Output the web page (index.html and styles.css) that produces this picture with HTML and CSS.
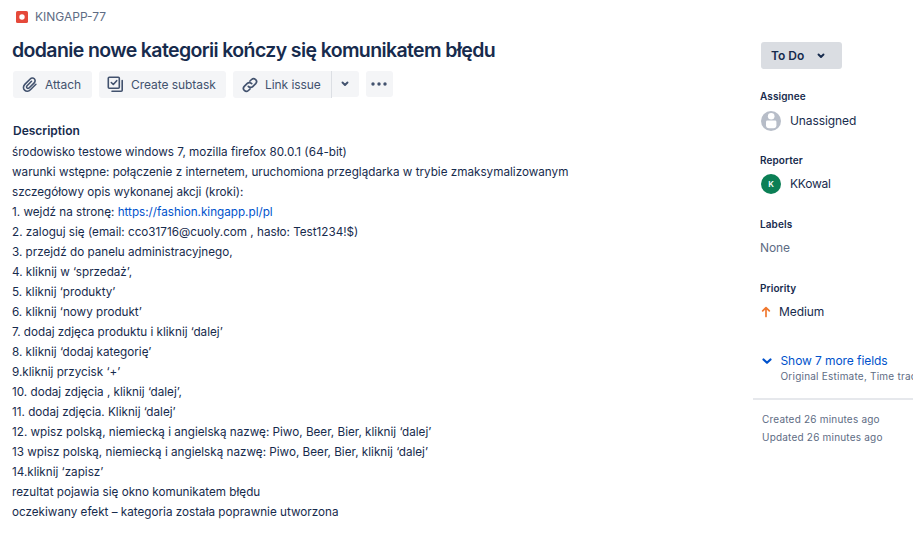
FILE: index.html
```html
<!DOCTYPE html>
<html lang="pl">
<head>
<meta charset="utf-8">
<title>KINGAPP-77</title>
<link rel="stylesheet" href="styles.css">
</head>
<body>
<div class="page">
  <main class="issue">
    <div class="crumb">
      <svg width="12" height="12" viewBox="0 0 12 12"><rect width="12" height="12" rx="1.6" fill="#e5493a"/><circle cx="6" cy="6" r="2.7" fill="#fff"/></svg>
      <span class="key">KINGAPP-77</span>
    </div>
    <h1><span class="title">dodanie nowe kategorii kończy się komunikatem błędu</span></h1>
    <div class="toolbar">
      <button class="btn attach">
        <svg width="16" height="16" viewBox="0 0 16 16" fill="none" stroke="#42526e" stroke-width="1.6" stroke-linecap="round" stroke-linejoin="round"><path d="M13.900 7.300 8.400 12.800c-1.700 1.700-4.200 1.900-5.800.4s-1.500-4.100.2-5.800L8.200 2c1.200-1.200 3-1.300 4.100-.2s1.100 2.900-.1 4.100L7.300 10.800c-.7.7-1.700.8-2.300.2s-.6-1.600.1-2.300L9.500 4.300"/></svg>
        <span class="label-attach">Attach</span>
      </button>
      <button class="btn subtask">
        <svg width="17" height="17" viewBox="0 0 17 17" fill="none" stroke="#42526e" stroke-width="1.600" stroke-linecap="round" stroke-linejoin="round"><rect x="1.300" y="1.300" width="11" height="11" rx="1"/><path d="m4.300 6.500 2 2L9.700 4.700M15.200 4.500v9.700a1 1 0 0 1-1 1H5"/></svg>
        <span class="label-subtask">Create subtask</span>
      </button>
      <div class="split">
        <button class="btn link">
          <svg width="16" height="16" viewBox="0 0 16 16" fill="none" stroke="#42526e" stroke-width="1.700" stroke-linecap="round"><path d="M6.300 9.400a3 3 0 0 0 4.400.2l3-3a2.900 2.900 0 0 0-4.100-4.100L8 4M9.700 6.600a3 3 0 0 0-4.400-.2l-3 3a2.900 2.900 0 0 0 4.100 4.100L8 12"/></svg>
          <span class="label-link">Link issue</span>
        </button>
        <button class="btn more-links"><svg width="8" height="6" viewBox="0 0 8 6" fill="none" stroke="#42526e" stroke-width="1.900" stroke-linecap="round" stroke-linejoin="round"><path d="m1.500 1.500 2.500 2.500 2.500-2.500"/></svg></button>
      </div>
      <button class="btn dots"><svg width="16" height="4" viewBox="0 0 16 4" fill="#42526e"><circle cx="2" cy="2" r="1.700"/><circle cx="8" cy="2" r="1.700"/><circle cx="14" cy="2" r="1.700"/></svg></button>
    </div>
    <h2><span class="desc-title">Description</span></h2>
    <div class="description">
      <p><span>środowisko testowe windows 7, mozilla firefox 80.0.1 (64-bit)</span></p>
      <p><span>warunki wstępne: połączenie z internetem, uruchomiona przeglądarka w trybie zmaksymalizowanym</span></p>
      <p><span>szczegółowy opis wykonanej akcji (kroki):</span></p>
      <p><span>1. wejdź na stronę: <a>https://fashion.kingapp.pl/pl</a></span></p>
      <p><span>2. zaloguj się (email: cco31716@cuoly.com , hasło: Test1234!$)</span></p>
      <p><span>3. przejdź do panelu administracyjnego,</span></p>
      <p><span>4. kliknij w ‘sprzedaż’,</span></p>
      <p><span>5. kliknij ‘produkty’</span></p>
      <p><span>6. kliknij ‘nowy produkt’</span></p>
      <p><span>7. dodaj zdjęca produktu i kliknij ‘dalej’</span></p>
      <p><span>8. kliknij ‘dodaj kategorię’</span></p>
      <p><span>9.kliknij przycisk ‘+’</span></p>
      <p><span>10. dodaj zdjęcia , kliknij ‘dalej’,</span></p>
      <p><span>11. dodaj zdjęcia. Kliknij ‘dalej’</span></p>
      <p><span>12. wpisz polską, niemiecką i angielską nazwę: Piwo, Beer, Bier, kliknij ‘dalej’</span></p>
      <p><span>13 wpisz polską, niemiecką i angielską nazwę: Piwo, Beer, Bier, kliknij ‘dalej’</span></p>
      <p><span>14.kliknij ‘zapisz’</span></p>
      <p><span>rezultat pojawia się okno komunikatem błędu</span></p>
      <p><span>oczekiwany efekt – kategoria została poprawnie utworzona</span></p>
    </div>
  </main>
  <aside class="details">
    <button class="status"><span>To Do</span><svg width="8" height="6" viewBox="0 0 8 6" fill="none" stroke="#172b4d" stroke-width="1.900" stroke-linecap="round" stroke-linejoin="round"><path d="m1.500 1.500 2.500 2.500 2.500-2.500"/></svg></button>
    <section class="field">
      <h3><span>Assignee</span></h3>
      <div class="person">
        <svg width="20" height="20" viewBox="0 0 20 20"><circle cx="10" cy="10" r="10" fill="#b7bdc8"/><circle cx="10.200" cy="5.300" r="3.300" fill="#fff"/><path d="M5 10.800q0-1.300 1.300-1.300h7.800q1.300 0 1.300 1.300v3.400q0 3-3 3H8q-3 0-3-3z" fill="#fff"/></svg>
        <span class="unassigned">Unassigned</span>
      </div>
    </section>
    <section class="field">
      <h3><span>Reporter</span></h3>
      <div class="person"><span class="avatar">K</span><span class="reporter">KKowal</span></div>
    </section>
    <section class="field">
      <h3><span>Labels</span></h3>
      <div class="none"><span>None</span></div>
    </section>
    <section class="field">
      <h3><span>Priority</span></h3>
      <div class="priority">
        <svg width="10" height="12" viewBox="0 0 10 12" fill="none" stroke="#f0782f" stroke-width="1.700" stroke-linecap="round" stroke-linejoin="round"><path d="M5 10.500V1.700M1.700 4.900 5 1.600l3.300 3.300"/></svg>
        <span class="medium">Medium</span>
      </div>
    </section>
    <div class="show">
      <svg width="10" height="7" viewBox="0 0 10 7" fill="none" stroke="#0052cc" stroke-width="2.200" stroke-linecap="round" stroke-linejoin="round"><path d="M1.500 1.500 5 4.800l3.500-3.300"/></svg>
      <span class="show-text">Show 7 more fields</span>
    </div>
    <div class="hint"><span>Original Estimate, Time tracking</span></div>
    <div class="dates">
      <p><span>Created 26 minutes ago</span></p>
      <p><span>Updated 26 minutes ago</span></p>
    </div>
  </aside>
</div>
</body>
</html>
```
FILE: styles.css
```css
* { box-sizing: border-box; }
body {
  margin: 0;
  background: #fff;
  color: #172b4d;
  font: 12px/20px Inter, "Liberation Sans", sans-serif;
}
h1, h2, h3, p { margin: 0; }
svg { display: block; flex: none; }
.page { display: flex; width: 913px; height: 533px; overflow: hidden; }
.issue { width: 753px; flex: none; padding: 7px 0 0 12px; white-space: nowrap; }
.crumb { display: flex; align-items: center; gap: 7px; height: 20px; padding-left: 4px; color: #5e6c84; }
h1 { margin-top: 9px; height: 28px; font-size: 19.5px; line-height: 28px; font-weight: 600; letter-spacing: -0.62px; }
.toolbar { display: flex; gap: 7px; margin: 7px 0 0 1px; }
.btn {
  display: flex;
  align-items: center;
  height: 27px;
  padding: 0;
  border: 0;
  border-radius: 3px;
  background: #f4f5f7;
  color: #42526e;
  font: inherit;
  letter-spacing: -0.06px;
}
.attach { width: 79px; padding-left: 9px; gap: 7px; }
.subtask { width: 127px; padding-left: 8px; gap: 7px; }
.split { display: flex; }
.link { width: 99px; padding-left: 9px; gap: 7px; border-right: 1px solid #dcdfe4; border-radius: 3px 0 0 3px; }
.more-links { width: 27px; height: 26px; padding-right: 1px; justify-content: center; border-radius: 0 3px 3px 0; }
.dots { width: 27px; height: 26px; padding-right: 1px; justify-content: center; }
h2 { margin: 23px 0 0 1px; height: 20px; font-size: 12px; line-height: 20px; font-weight: 600; }
.description { margin-top: 1px; font-size: 11.7px; }
a { color: #0052cc; }
.details { width: 160px; flex: none; padding-top: 42px; white-space: nowrap; overflow: hidden; }
.status {
  display: flex;
  align-items: center;
  gap: 13px;
  width: 81px;
  height: 27px;
  margin: 0 0 17px 8px;
  padding: 0 0 0 10px;
  border: 0;
  border-radius: 3px;
  background: #dadde2;
  color: #172b4d;
  font: inherit;
  font-weight: 600;
}
.field { height: 64px; padding-left: 7px; letter-spacing: -0.1px; }
h3 { height: 20px; font-size: 10px; line-height: 20px; font-weight: 600; letter-spacing: 0.1px; }
.person { display: flex; align-items: center; gap: 9px; height: 20px; margin: 5px 0 0 1px; }
.field + .field .person { margin-top: 4px; }
.avatar {
  width: 20px;
  height: 20px;
  border-radius: 50%;
  background: #0b7f55;
  color: #fff;
  font-size: 8px;
  font-weight: 600;
  line-height: 20px;
  text-align: center;
}
.reporter { letter-spacing: -0.25px; }
.none { margin-top: 4px; color: #5e6c84; }
.priority { display: flex; align-items: center; gap: 8px; height: 20px; margin: 4px 0 0 1px; }
.show { display: flex; align-items: center; gap: 9px; height: 20px; margin-top: 9px; padding-left: 8.5px; color: #0052cc; letter-spacing: -0.08px; }
.hint { height: 16px; margin-top: -3px; padding-left: 27.5px; font-size: 10px; line-height: 16px; color: #5e6c84; letter-spacing: 0.22px; }
.dates { margin-top: 14px; padding: 10px 0 0 9px; border-top: 2px solid #e6e8ec; font-size: 10px; line-height: 18px; color: #5e6c84; letter-spacing: 0.2px; }
```
